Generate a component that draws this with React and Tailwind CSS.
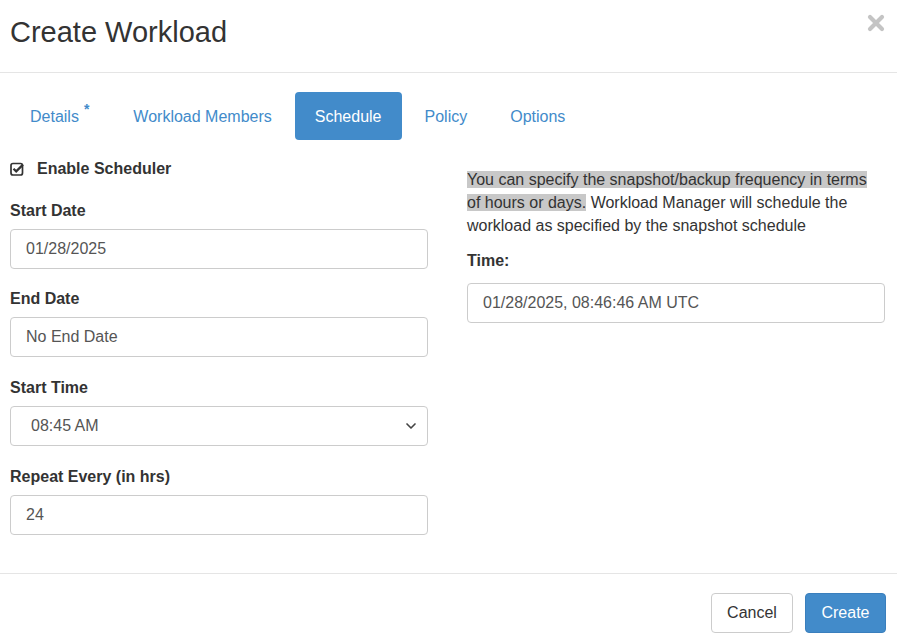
import { ChevronDown } from 'lucide-react'

const FONT = { fontFamily: '"Liberation Sans", Arial, sans-serif' }

function Field({ label, children }) {
  return (
    <div className="mb-[20px]">
      <div className="text-[16px] font-bold text-[#333] leading-[21px] mb-[8px]">{label}</div>
      {children}
    </div>
  )
}

function Input({ value }) {
  return (
    <div className="h-[40px] border border-[#cccccc] rounded-[4px] px-[15px] flex items-center text-[16px] text-[#555]">
      {value}
    </div>
  )
}

function CheckSquare() {
  return (
    <svg width="14" height="14" viewBox="0 0 14 14" className="text-[#333]">
      <rect x="1" y="1.5" width="11.5" height="11.5" rx="2" fill="none" stroke="currentColor" strokeWidth="1.7" />
      <path d="M3.5 6.8 L6.2 9.4 L13 2.6" fill="none" stroke="currentColor" strokeWidth="2.2" />
    </svg>
  )
}

export default function App() {
  const tabs = ['Details', 'Workload Members', 'Schedule', 'Policy', 'Options']
  return (
    <div className="w-[897px] h-[639px] bg-white overflow-hidden" style={FONT}>
      {/* Header */}
      <div className="h-[73px] border-b border-[#e5e5e5] flex items-start justify-between pl-[10px] pr-[12px]">
        <h1 className="text-[29px] text-[#333] mt-[15px] leading-[34px]">Create Workload</h1>
        <svg width="18" height="18" viewBox="0 0 18 18" className="mt-[14px]">
          <path d="M3 3 L15 15 M15 3 L3 15" stroke="#c4c4c4" strokeWidth="4.2" strokeLinecap="round" />
        </svg>
      </div>

      {/* Tabs */}
      <div className="flex items-center mt-[19px] pl-[10px] h-[48px]">
        {tabs.map((t) => (
          <div
            key={t}
            className={
              t === 'Schedule'
                ? 'h-[48px] px-[20px] flex items-center rounded-[4px] bg-[#428bca] text-white text-[16px] mr-[3px] pt-[1px]'
                : 'h-[48px] px-[20px] flex items-center text-[#428bca] text-[16px] mr-[3px] pt-[1px]'
            }
          >
            {t}
            {t === 'Details' && <span className="relative -top-[7px] ml-[5px] mr-[1px] text-[14px] font-bold">*</span>}
          </div>
        ))}
      </div>

      {/* Body */}
      <div className="flex gap-[39px] pl-[10px] pr-[12px] mt-[17px] h-[416px]">
        <div className="w-[418px]">
          <div className="flex items-center gap-[13px] h-[22px] mb-[21px] pt-[1px]">
            <CheckSquare />
            <span className="text-[16px] font-bold text-[#333]">Enable Scheduler</span>
          </div>
          <Field label="Start Date"><Input value="01/28/2025" /></Field>
          <div className="-mt-[1px]" />
          <Field label="End Date"><Input value="No End Date" /></Field>
          <Field label="Start Time">
            <div className="h-[40px] border border-[#cccccc] rounded-[4px] pl-[20px] pr-[8px] flex items-center justify-between text-[16px] text-[#555]">
              <span>08:45 AM</span>
              <ChevronDown size={16} strokeWidth={2.5} className="text-[#444]" />
            </div>
          </Field>
          <Field label="Repeat Every (in hrs)"><Input value="24" /></Field>
        </div>
        <div className="w-[418px] pt-[11px]">
          <p className="text-[16px] leading-[23px] text-[#333] max-w-[411px]">
            <span className="bg-[#c8c8c8]">You can specify the snapshot/backup frequency in terms of hours or days.</span>{' '}
            Workload Manager will schedule the workload as specified by the snapshot schedule
          </p>
          <div className="text-[16px] font-bold text-[#333] leading-[22px] mt-[13px] mb-[11px]">Time:</div>
          <Input value="01/28/2025, 08:46:46 AM UTC" />
        </div>
      </div>

      {/* Footer */}
      <div className="border-t border-[#e5e5e5] flex justify-end gap-[12px] pr-[11px] pt-[19px]">
        <button className="h-[40px] w-[82px] border border-[#cccccc] rounded-[4px] bg-white text-[16px] text-[#333]">Cancel</button>
        <button className="h-[40px] w-[81px] border border-[#3a7fbd] rounded-[4px] bg-[#428bca] text-[16px] text-white">Create</button>
      </div>
    </div>
  )
}
